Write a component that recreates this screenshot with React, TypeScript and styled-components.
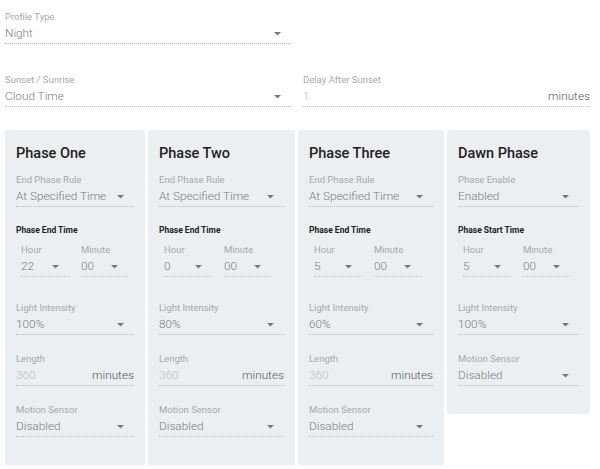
import React from 'react';
import styled, { createGlobalStyle } from 'styled-components';

interface Phase {
  title: string;
  ruleLabel: string;
  ruleValue: string;
  timeTitle: string;
  hour: string;
  minute: string;
  intensity: string;
  showLength: boolean;
}

const phases: Phase[] = [
  { title: 'Phase One', ruleLabel: 'End Phase Rule', ruleValue: 'At Specified Time', timeTitle: 'Phase End Time', hour: '22', minute: '00', intensity: '100%', showLength: true },
  { title: 'Phase Two', ruleLabel: 'End Phase Rule', ruleValue: 'At Specified Time', timeTitle: 'Phase End Time', hour: '0', minute: '00', intensity: '80%', showLength: true },
  { title: 'Phase Three', ruleLabel: 'End Phase Rule', ruleValue: 'At Specified Time', timeTitle: 'Phase End Time', hour: '5', minute: '00', intensity: '60%', showLength: true },
  { title: 'Dawn Phase', ruleLabel: 'Phase Enable', ruleValue: 'Enabled', timeTitle: 'Phase Start Time', hour: '5', minute: '00', intensity: '100%', showLength: false },
];

const Arrow = () => (
  <svg width="7" height="4" viewBox="0 0 7 4">
    <path d="M0 0 L7 0 L3.5 3.5 Z" fill="#7a7a7a" />
  </svg>
);

const Select: React.FC<{ label: string; value: string; gap?: number }> = ({ label, value, gap }) => (
  <Field gap={gap}>
    <Label>{label}</Label>
    <Row>
      <Value>{value}</Value>
      <ArrowBox>
        <Arrow />
      </ArrowBox>
    </Row>
  </Field>
);

const NumberInput: React.FC<{ label: string; value: string; gap?: number }> = ({ label, value, gap }) => (
  <Field gap={gap}>
    <Label>{label}</Label>
    <Row>
      <Value muted>{value}</Value>
      <Unit>minutes</Unit>
    </Row>
  </Field>
);

const App: React.FC = () => (
  <>
    <GlobalStyle />
    <Page>
      <TopRow>
        <Select label="Profile Type" value="Night" />
      </TopRow>
      <TopRow second>
        <Select label="Sunset / Sunrise" value="Cloud Time" />
        <NumberInput label="Delay After Sunset" value="1" />
      </TopRow>
      <Cards>
        {phases.map((p) => (
          <Card key={p.title}>
            <Title>{p.title}</Title>
            <Select label={p.ruleLabel} value={p.ruleValue} />
            <SubTitle>{p.timeTitle}</SubTitle>
            <TimeRow>
              <Select label="Hour" value={p.hour} />
              <Select label="Minute" value={p.minute} />
            </TimeRow>
            <Select label="Light Intensity" value={p.intensity} gap={25} />
            {p.showLength && <NumberInput label="Length" value="360" gap={18} />}
            <Select label="Motion Sensor" value="Disabled" gap={18} />
          </Card>
        ))}
      </Cards>
    </Page>
  </>
);

export default App;

const GlobalStyle = createGlobalStyle`
  body {
    margin: 0;
    background: #ffffff;
    font-family: Roboto, "Liberation Sans", sans-serif;
  }
`;

const Page = styled.div`
  padding: 11px 10px 0 5px;
  width: 600px;
  box-sizing: border-box;
`;

const TopRow = styled.div<{ second?: boolean }>`
  display: grid;
  grid-template-columns: 286px 287px;
  column-gap: 12px;
  margin-top: ${({ second }) => (second ? '30px' : '0')};
`;

const Field = styled.div<{ gap?: number }>`
  display: flex;
  flex-direction: column;
  margin-top: ${({ gap }) => (gap ? `${gap}px` : '0')};
`;

const Label = styled.div`
  font-size: 9.5px;
  line-height: 12px;
  color: #a8a8a8;
  white-space: nowrap;
`;

const Row = styled.div`
  display: flex;
  align-items: center;
  height: 20px;
  border-bottom: 1px dotted #bdbdbd;
`;

const Value = styled.div<{ muted?: boolean }>`
  flex: 1;
  font-size: 11.8px;
  font-weight: 300;
  color: ${({ muted }) => (muted ? '#bcbcbc' : '#7c7c7c')};
  white-space: nowrap;
`;

const ArrowBox = styled.div`
  display: flex;
  align-items: center;
  padding: 1px 10px 0 4px;
`;

const Unit = styled.div`
  font-size: 11.8px;
  font-weight: 300;
  color: #555555;
`;

const Cards = styled.div`
  display: grid;
  grid-template-columns: 140px 147px 146px 143px;
  column-gap: 3px;
  align-items: start;
  margin-top: 23px;
`;

const Card = styled.div`
  background: #eceff1;
  border-radius: 2px;
  padding: 14px 11px 28px 11px;
  display: flex;
  flex-direction: column;
`;

const Title = styled.div`
  font-size: 14.5px;
  font-weight: 500;
  line-height: 20px;
  color: #212121;
  margin-bottom: 10px;
  white-space: nowrap;
`;

const SubTitle = styled.div`
  font-size: 8.5px;
  font-weight: 700;
  line-height: 12px;
  color: #212121;
  margin-top: 17px;
  white-space: nowrap;
`;

const TimeRow = styled.div`
  display: grid;
  grid-template-columns: 48px 47px;
  column-gap: 12px;
  padding-left: 5px;
  margin-top: 8px;
`;
